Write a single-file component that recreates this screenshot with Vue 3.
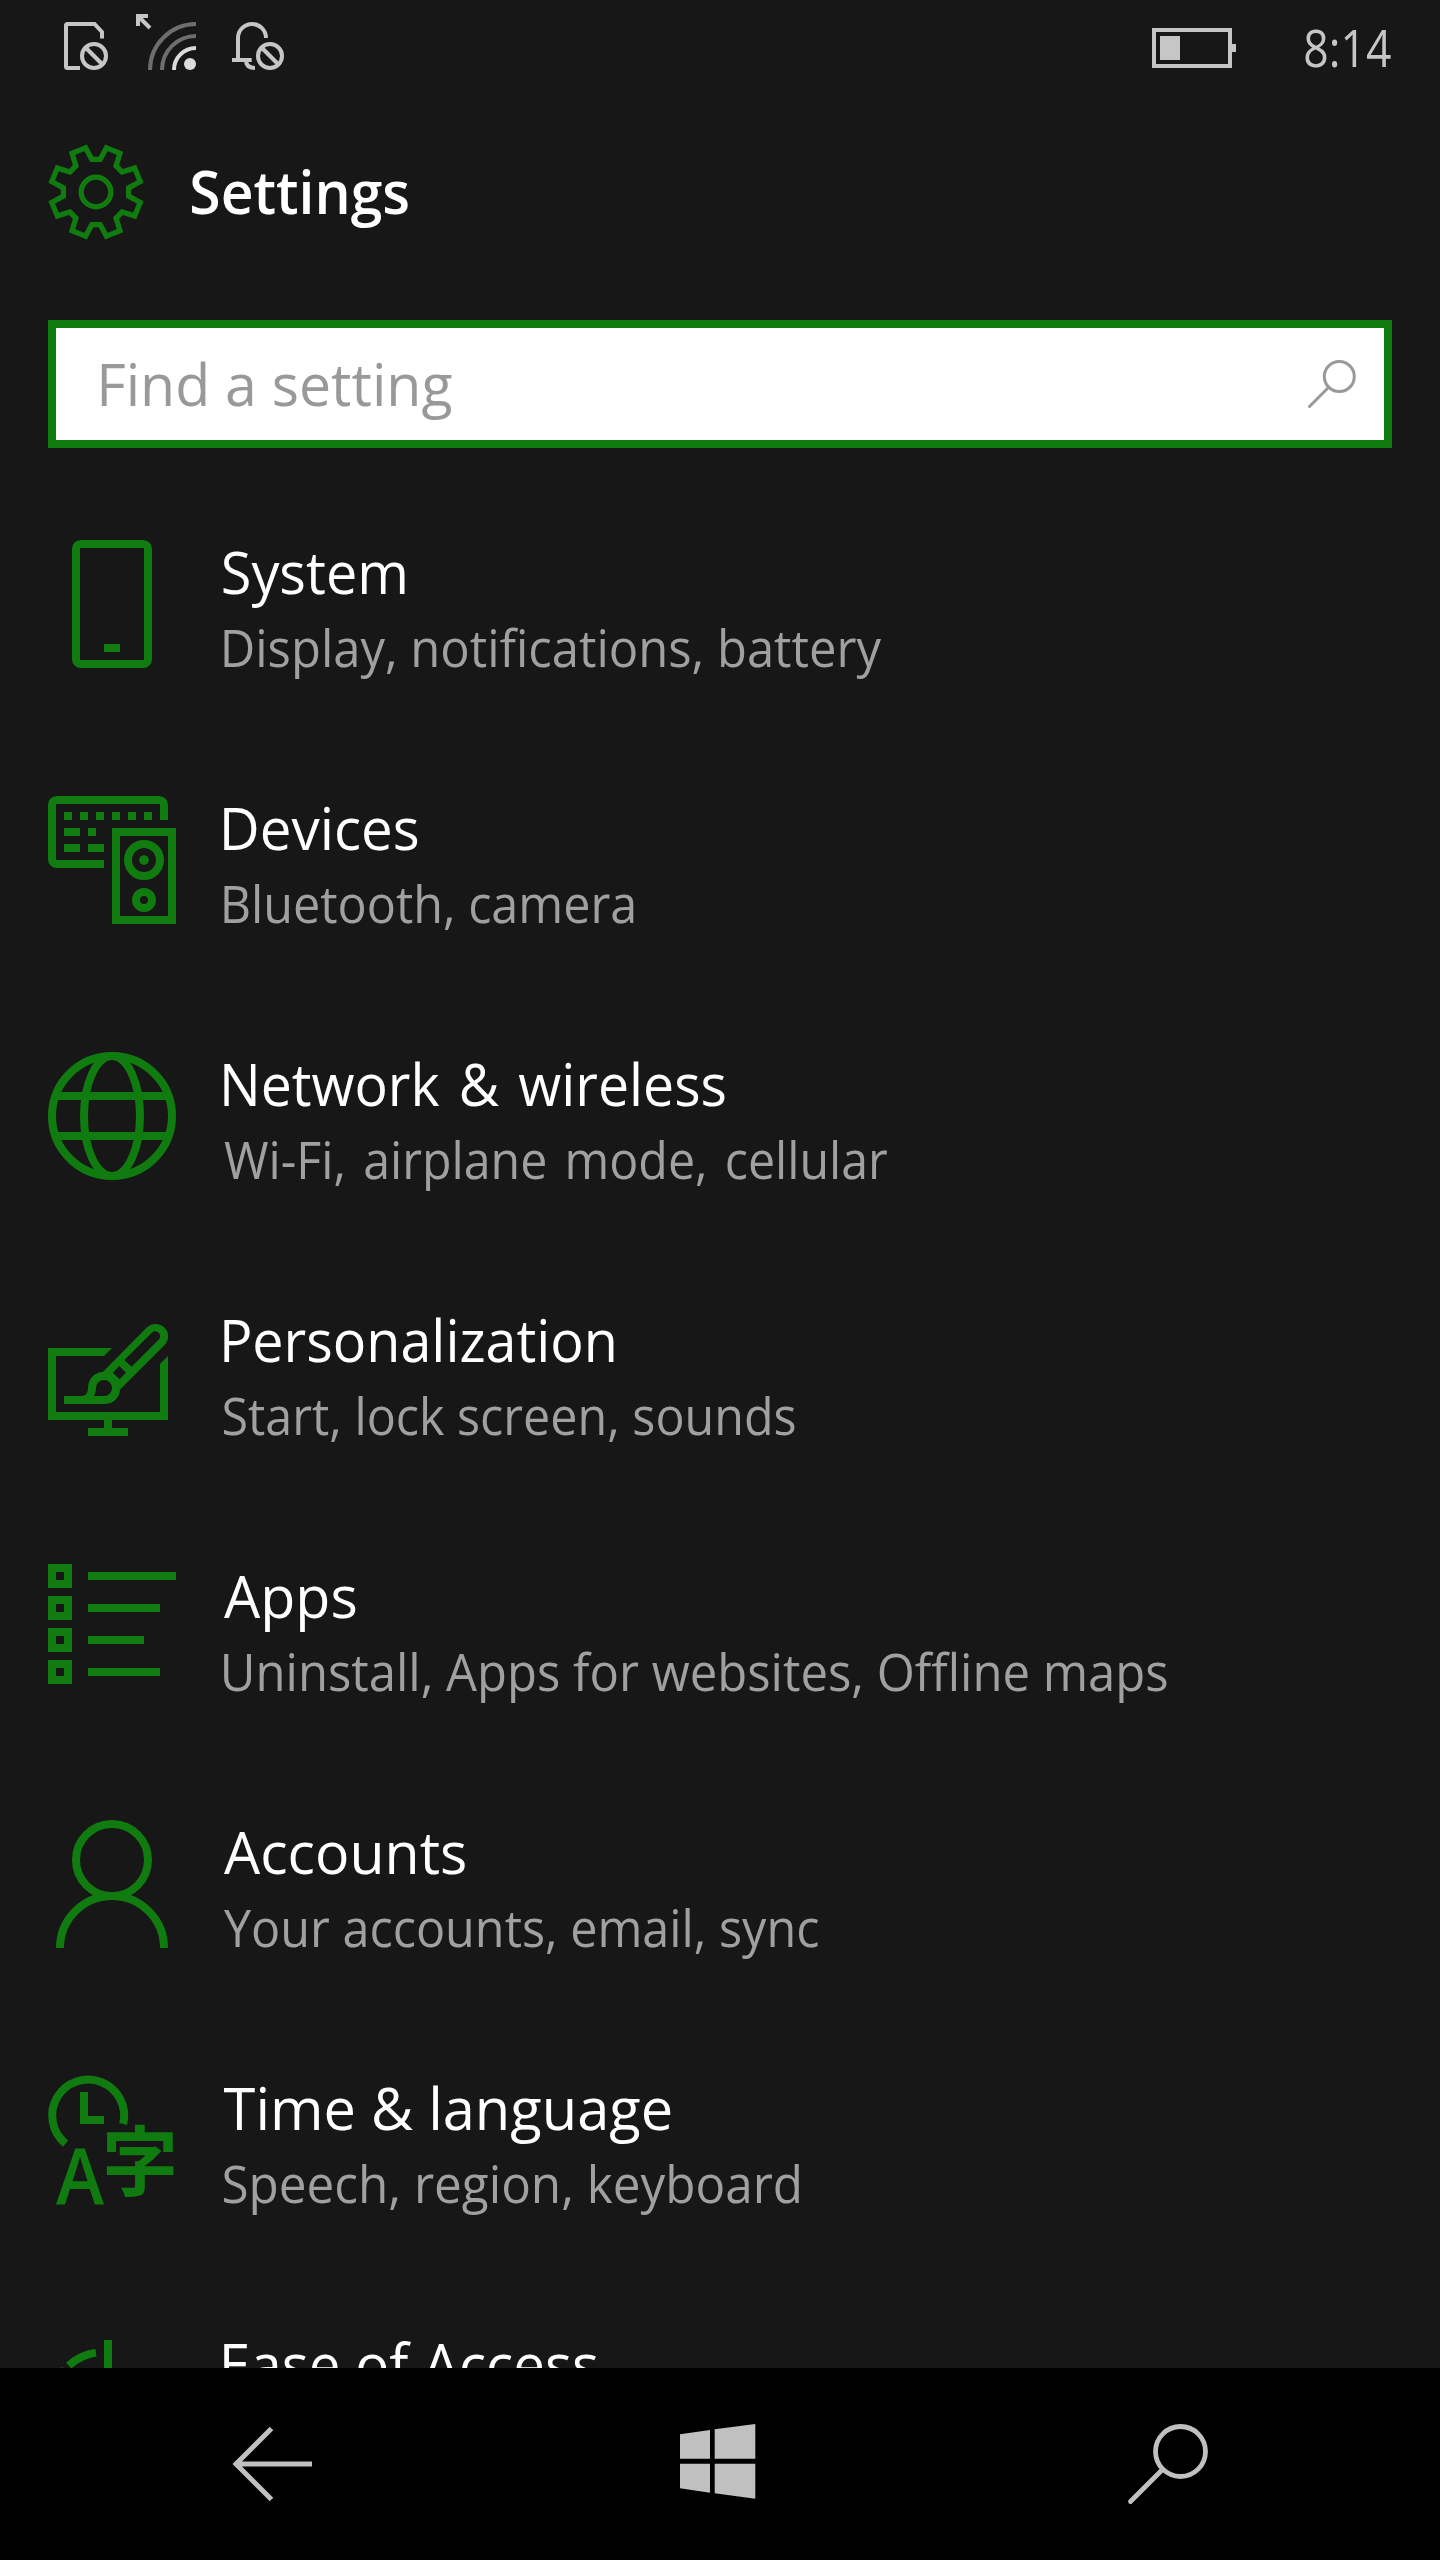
<script setup>
// Stretches a line of text so that its visible glyphs run from one x to another.
const vInk = {
  mounted(el, { value }) {
    const [from, to] = value
    const ctx = document.createElement('canvas').getContext('2d')
    const cs = getComputedStyle(el)
    ctx.font = `${cs.fontWeight} ${cs.fontSize} ${cs.fontFamily}`
    ctx.wordSpacing = cs.wordSpacing
    const m = ctx.measureText(el.textContent)
    const scale = (to - from) / (m.actualBoundingBoxLeft + m.actualBoundingBoxRight)
    const shift = from - el.getBoundingClientRect().left + scale * m.actualBoundingBoxLeft
    el.style.transform = `translateX(${shift.toFixed(2)}px) scaleX(${scale.toFixed(4)})`
  },
}

// One notch and half a tooth on each side, repeated eight times round the hub.
const gear = Array.from({ length: 8 }, (_, k) => {
  const a = (k * Math.PI) / 4
  return [[-10.4, -44.2], [-4.2, -32.6], [4.2, -32.6], [10.4, -44.2]]
    .map(([x, y]) => [
      (48 + x * Math.cos(a) - y * Math.sin(a)).toFixed(2),
      (48 + x * Math.sin(a) + y * Math.cos(a)).toFixed(2),
    ].join(','))
    .join(' ')
}).join(' ')

const items = [
  { icon: 'system', title: 'System', t: [223.6, 404.6], sub: 'Display, notifications, battery', s: [223.6, 881.4] },
  { icon: 'devices', title: 'Devices', t: [223.6, 417.7], sub: 'Bluetooth, camera', s: [223.6, 634] },
  { icon: 'network', title: 'Network & wireless', t: [223.6, 725], sub: 'Wi-Fi, airplane mode, cellular', s: [224, 888] },
  { icon: 'personal', title: 'Personalization', t: [223.6, 614], sub: 'Start, lock screen, sounds', s: [223.4, 795.4] },
  { icon: 'apps', title: 'Apps', t: [224, 355.7], sub: 'Uninstall, Apps for websites, Offline maps', s: [223.6, 1167.4] },
  { icon: 'accounts', title: 'Accounts', t: [224, 465.3], sub: 'Your accounts, email, sync', s: [224, 818] },
  { icon: 'time', title: 'Time & language', t: [223.6, 671], sub: 'Speech, region, keyboard', s: [223.4, 799] },
  { icon: 'ease', title: 'Ease of Access', t: [223.6, 597], sub: '', s: null },
]
</script>

<template>
  <div class="phone">
    <div class="status">
      <svg class="signals" width="240" height="88" viewBox="60 0 240 88" fill="none" stroke="#c6c6c6" stroke-width="4">
        <path d="M80 68H67.500Q66 68 66 66.500V25.500Q66 24 67.500 24H94.500L102 32V38.500" />
        <circle cx="94" cy="56" r="12" />
        <path d="M86 48L102 64" />
        <path d="M138 26V16H148M138 16L150 28" />
        <g stroke="#6e6e6e">
          <path d="M150 70A46 46 0 0 1 196 24" />
          <path d="M162 70A34 34 0 0 1 196 36" />
        </g>
        <path d="M174 70A22 22 0 0 1 196 48" stroke="#dcdcdc" />
        <circle cx="190" cy="64" r="6" fill="#dcdcdc" stroke="none" />
        <path d="M238 60V38A14 14 0 0 1 266 38M232 60H251.700M246 61Q246.500 68 255 68" />
        <circle cx="270" cy="56" r="12" />
        <path d="M262 48L278 64" />
      </svg>
      <div class="status-right">
        <svg class="battery" width="84" height="40" viewBox="0 0 84 40" fill="#c6c6c6">
          <rect x="2" y="2" width="76" height="36" fill="none" stroke="#c6c6c6" stroke-width="4" />
          <rect x="8" y="8" width="20" height="24" />
          <rect x="80" y="16" width="4" height="8" />
        </svg>
        <span v-ink="[1305, 1390.7]" class="clock fit">8:14</span>
      </div>
    </div>

    <header class="header">
      <svg width="96" height="96" viewBox="0 0 96 96" fill="none" stroke="#107c10" stroke-width="5.300">
        <polygon :points="gear" />
        <circle cx="48" cy="48" r="14.800" />
      </svg>
      <h1 v-ink="[191.3, 408.3]" class="fit">Settings</h1>
    </header>

    <div class="search">
      <span v-ink="[101, 451.5]" class="fit">Find a setting</span>
      <svg width="52" height="54" viewBox="0 0 52 54" fill="none" stroke="#999" stroke-width="3" stroke-linecap="round">
        <circle cx="32.300" cy="20.500" r="15" />
        <path d="M21.700 31.300L2.500 50.500" />
      </svg>
    </div>

    <main class="list">
      <div v-for="item in items" :key="item.icon" class="row" :class="item.icon">
        <svg class="icon" viewBox="0 0 16 16" fill="none" stroke="#107c10">
          <template v-if="item.icon === 'system'">
            <rect x="3.500" y=".5" width="9" height="15" rx=".6" />
            <path d="M7 13.500h2" />
          </template>
          <template v-else-if="item.icon === 'devices'">
            <path d="M14.500 3V1.100a.6.6 0 0 0-.6-.6H1.100a.6.6 0 0 0-.6.6v6.800a.6.6 0 0 0 .6.6H7" />
            <path d="M2 2.500h11" stroke-dasharray="1 1" />
            <path d="M2 4.500h2M5 4.500h1M2 6.500h2M5 6.500h2" />
            <rect x="8.500" y="4.500" width="7" height="11" />
            <circle cx="12" cy="8" r="2" />
            <circle cx="12" cy="8" r=".6" fill="#107c10" stroke="none" />
            <circle cx="12" cy="13" r="1" />
          </template>
          <template v-else-if="item.icon === 'network'">
            <circle cx="8" cy="8" r="7.500" />
            <ellipse cx="8" cy="8" rx="3.500" ry="7.500" />
            <path d="M1 5.500h14M1 10.500h14" />
          </template>
          <g v-else-if="item.icon === 'personal'" fill="#107c10" stroke="none" fill-rule="evenodd">
            <path d="M8 5H0v9h7v1H5v1h5v-1H8v-1h7V6l-1 1v6H1V6h6z" />
            <path d="M6.850 8L12.350 2.450A1.550 1.550 0 0 1 14.550 4.650L9 10.200C8.950 11.200 8.200 12 7.200 12H2V11H4.200C4.700 11 5 10.600 5 10C5 8.800 5.900 8 6.850 8ZM9.550 6.500L10.450 7.350L13.850 3.950A.62.62 0 0 0 13 3.050ZM8.100 8.100L8.950 8.900L9.750 8.100L8.900 7.250ZM5.750 11Q6 10.600 6 10A1 1 0 1 1 7 11Z" />
          </g>
          <template v-else-if="item.icon === 'apps'">
            <path v-for="y in [0, 4, 8, 12]" :key="y" :d="`M.5 ${y + 0.5}h2v2h-2z`" />
            <path d="M5 1.500h11M5 5.500h9M5 9.500h7M5 13.500h9" />
          </template>
          <template v-else-if="item.icon === 'accounts'">
            <circle cx="8" cy="5" r="4.500" />
            <path d="M1.500 16a6.500 6.500 0 0 1 13 0" />
          </template>
          <template v-else-if="item.icon === 'time'">
            <path d="M9.400 6A4.500 4.500 0 1 0 2.200 8.450M4.500 2V5.500H7" />
            <g transform="scale(.125)" fill="#107c10" stroke="none">
              <text class="latin" x="8" y="128" textLength="48" lengthAdjust="spacingAndGlyphs">A</text>
              <text class="cjk" x="54" y="114">字</text>
            </g>
          </template>
          <template v-else>
            <path d="M7.500 1V9M6 2.580A6.500 6.500 0 0 0 2.600 4.200M2.120 4.710A6.500 6.500 0 0 0 .6 8" />
          </template>
        </svg>
        <div class="text">
          <div v-ink="item.t" class="title fit">{{ item.title }}</div>
          <div v-if="item.sub" v-ink="item.s" class="sub fit">{{ item.sub }}</div>
        </div>
      </div>
    </main>

    <nav class="nav">
      <svg width="80" height="80" viewBox="0 0 80 80" fill="none" stroke="#c0c0c0" stroke-width="5">
        <path d="M39.500 4.500L4 40L39.500 75.500M4 40H80" />
      </svg>
      <svg width="76" height="80" viewBox="0 0 76 80" fill="#c0c0c0">
        <path d="M0 10.300L30 6V34.700H0ZM34.700 5.300L75.300 0V34.700H34.700ZM0 39.700H30V68.700L0 64.300ZM34.700 39.700H75.300V74.700L34.700 69.300Z" />
      </svg>
      <svg width="82" height="80" viewBox="0 0 82 80" fill="none" stroke="#c0c0c0" stroke-width="4.800" stroke-linecap="round">
        <circle cx="52.500" cy="27.500" r="25" />
        <path d="M34.500 45.500L2.500 77.500" />
      </svg>
    </nav>
  </div>
</template>

<style>
body {
  margin: 0;
  background: #171717;
}
</style>

<style scoped>
.phone {
  display: flex;
  flex-direction: column;
  width: 1440px;
  height: 2560px;
  overflow: hidden;
  background: #171717;
  color: #fff;
  font-family: "Open Sans", "Noto Sans", sans-serif;
}

svg {
  display: block;
  flex: none;
  overflow: visible;
}

.fit {
  display: block;
  width: max-content;
  white-space: nowrap;
  transform-origin: 0 50%;
}

.status {
  display: flex;
  justify-content: space-between;
  height: 88px;
  padding: 0 49px 0 60px;
}

.status-right {
  display: flex;
  gap: 66px;
  width: 239px;
}

.battery {
  margin-top: 28px;
}

.clock {
  color: #c6c6c6;
  font-size: 52px;
  line-height: 93px;
}

.header {
  display: flex;
  gap: 44px;
  height: 96px;
  padding: 56px 48px 80px;
}

h1 {
  margin: 0;
  font-size: 59px;
  font-weight: 600;
  line-height: 95px;
}

.search {
  display: flex;
  justify-content: space-between;
  box-sizing: border-box;
  height: 128px;
  margin: 0 48px;
  padding: 0 25px 0 40px;
  border: 8px solid #107c10;
  background: #fff;
  color: #999;
  font-size: 59px;
  line-height: 111px;
}

.search svg {
  margin-top: 28px;
}

.list {
  flex: 1;
  min-height: 0;
  padding: 80px 48px 0;
  overflow: hidden;
}

.row {
  display: flex;
  gap: 44px;
  height: 256px;
}

.network {
  word-spacing: 5px;
}

.icon {
  width: 128px;
  height: 128px;
  margin-top: 12px;
}

.latin {
  font: 600 78px "Open Sans", sans-serif;
}

.cjk {
  font: 700 76px "Noto Sans CJK JP", sans-serif;
}

.text {
  padding-top: 5px;
}

.title {
  font-size: 59px;
  line-height: 76px;
}

.sub {
  color: #a0a0a0;
  font-size: 51px;
  line-height: 76px;
}

.nav {
  position: relative;
  display: grid;
  grid-template-columns: 448px 448px 1fr;
  align-items: center;
  flex: none;
  height: 192px;
  padding-left: 232px;
  background: #000;
}
</style>
